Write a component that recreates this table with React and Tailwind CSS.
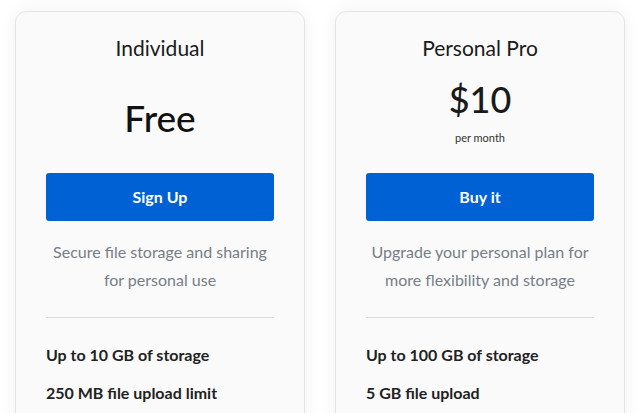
import React from "react";

const plans = [
  {
    name: "Individual",
    price: "Free",
    cta: "Sign Up",
    desc: ["Secure file storage and sharing", "for personal use"],
    features: ["Up to 10 GB of storage", "250 MB file upload limit"],
  },
  {
    name: "Personal Pro",
    price: "$10",
    period: "per month",
    cta: "Buy it",
    desc: ["Upgrade your personal plan for", "more flexibility and storage"],
    features: ["Up to 100 GB of storage", "5 GB file upload"],
  },
];

const PlanCard = ({ plan }) => {
  return (
    <div className="flex flex-col w-[290px] h-[440px] bg-[#fafafa] border border-[#e4e4e4] rounded-[11px] shadow-[0_0_18px_rgba(0,0,0,0.06)] px-[30px] pt-[22px]">
      <h2 className="text-center text-[21px] leading-[28px] text-[#1a1a1a]">
        {plan.name}
      </h2>

      {/* price block */}
      {plan.period ? (
        <div className="flex flex-col items-center h-[111px] pt-[15px]">
          <div className="text-[36px] leading-[44px] font-medium text-[#1a1a1a]">
            {plan.price}
          </div>
          <div className="mt-[9px] text-[11px] leading-[16px] text-[#333]">
            {plan.period}
          </div>
        </div>
      ) : (
        <div className="flex items-center justify-center h-[111px]">
          <div className="text-[37px] leading-[44px] font-medium text-[#111]">
            {plan.price}
          </div>
        </div>
      )}

      <button className="h-[48px] w-full rounded-[3px] bg-[#0061d5] text-white text-[16px] font-bold">
        {plan.cta}
      </button>

      <p className="mt-[17px] text-center text-[16px] leading-[28px] text-[#767e87]">
        {plan.desc[0]}
        <br />
        {plan.desc[1]}
      </p>

      <div className="mt-[23px] border-t border-[#dcdcdc]" />

      <ul className="mt-[18px]">
        {plan.features.map((f) => (
          <li
            key={f}
            className="py-[7px] text-[16px] leading-[24px] font-bold text-[#222]"
          >
            {f}
          </li>
        ))}
      </ul>
    </div>
  );
};

export default function App() {
  return (
    <div
      className="w-[640px] h-[413px] overflow-hidden bg-white"
      style={{ fontFamily: "Lato, 'Open Sans', sans-serif" }}
    >
      <div className="flex gap-[30px] pl-[15px] pt-[11px]">
        {plans.map((p) => (
          <PlanCard key={p.name} plan={p} />
        ))}
      </div>
    </div>
  );
}
